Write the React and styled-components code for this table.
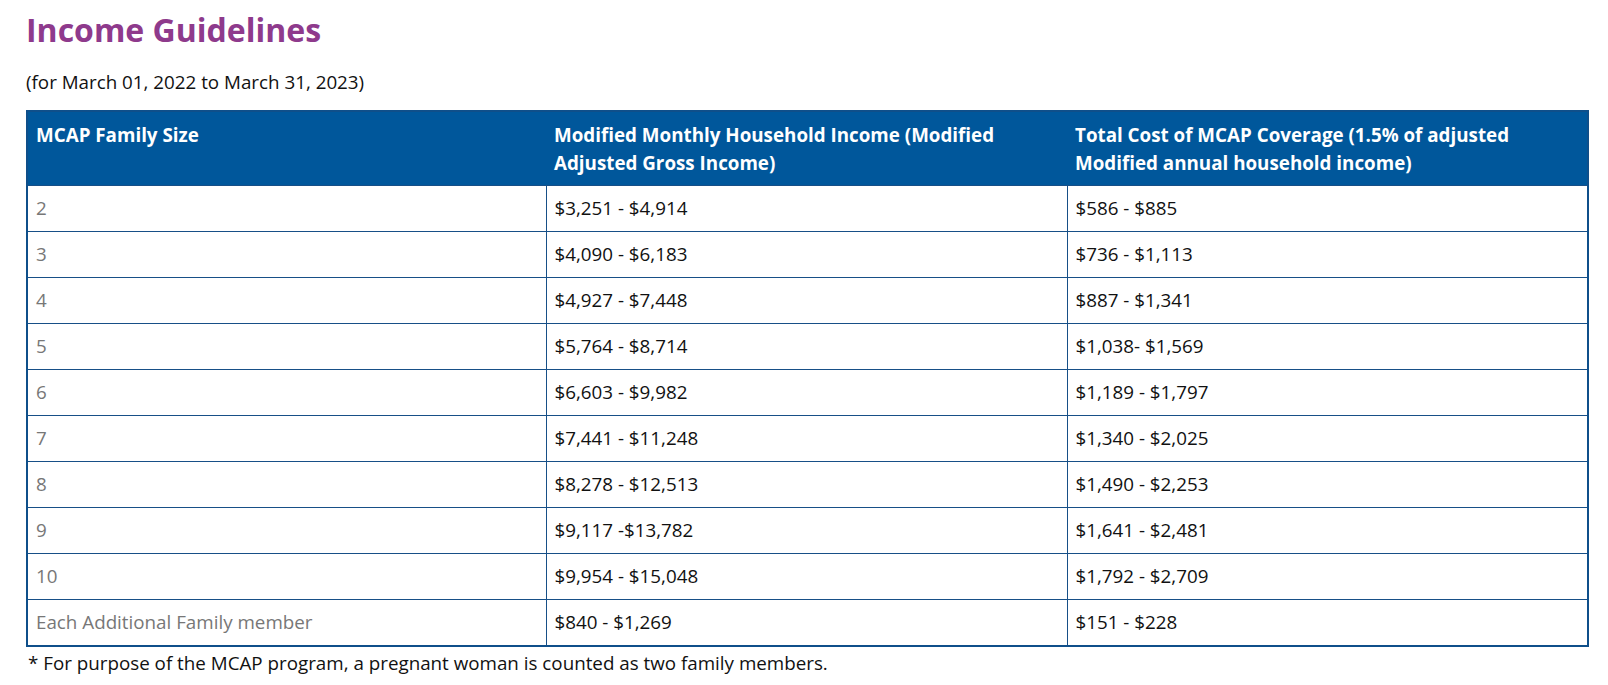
import React from "react";
import styled, { createGlobalStyle } from "styled-components";

const rows = [
  ["2", "$3,251 - $4,914", "$586 - $885"],
  ["3", "$4,090 - $6,183", "$736 - $1,113"],
  ["4", "$4,927 - $7,448", "$887 - $1,341"],
  ["5", "$5,764 - $8,714", "$1,038- $1,569"],
  ["6", "$6,603 - $9,982", "$1,189 - $1,797"],
  ["7", "$7,441 - $11,248", "$1,340 - $2,025"],
  ["8", "$8,278 - $12,513", "$1,490 - $2,253"],
  ["9", "$9,117 -$13,782", "$1,641 - $2,481"],
  ["10", "$9,954 - $15,048", "$1,792 - $2,709"],
  ["Each Additional Family member", "$840 - $1,269", "$151 - $228"],
];

export default function App() {
  return (
    <Page>
      <GlobalStyle />
      <Title>Income Guidelines</Title>
      <Subtitle>(for March 01, 2022 to March 31, 2023)</Subtitle>
      <Table>
        <colgroup>
          <col style={{ width: "519px" }} />
          <col style={{ width: "521px" }} />
          <col />
        </colgroup>
        <thead>
          <tr>
            <Th>MCAP Family Size</Th>
            <Th>Modified Monthly Household Income (Modified Adjusted Gross Income)</Th>
            <Th>Total Cost of MCAP Coverage (1.5% of adjusted Modified annual household income)</Th>
          </tr>
        </thead>
        <tbody>
          {rows.map((r, i) => (
            <tr key={i}>
              <Td muted>{r[0]}</Td>
              <Td>{r[1]}</Td>
              <Td>{r[2]}</Td>
            </tr>
          ))}
        </tbody>
      </Table>
      <Note>* For purpose of the MCAP program, a pregnant woman is counted as two family members.</Note>
    </Page>
  );
}

const GlobalStyle = createGlobalStyle`
  body {
    margin: 0;
    background: #ffffff;
    font-family: "Open Sans", "Noto Sans", sans-serif;
    color: #111111;
  }
`;

const Page = styled.div`
  padding: 8px 20px 0 26px;
`;

const Title = styled.h1`
  margin: 0;
  font-size: 32px;
  line-height: 44px;
  font-weight: 700;
  color: #8e3a8c;
`;

const Subtitle = styled.p`
  margin: 16px 0 14px;
  font-size: 18.8px;
  line-height: 28px;
  color: #111111;
`;

const Table = styled.table`
  width: 1563px;
  border-collapse: collapse;
  table-layout: fixed;
  border: 2px solid #0f4f8a;
`;

const Th = styled.th`
  background: #00579b;
  color: #ffffff;
  text-align: left;
  vertical-align: top;
  font-size: 18.8px;
  font-weight: 700;
  line-height: 28px;
  padding: 9px 8px 8px 8px;
  border: none;
`;

const Td = styled.td`
  font-size: 18.8px;
  line-height: 28px;
  padding: 8px 8px 9px;
  border: 1px solid #174f87;
  color: ${(p) => (p.muted ? "#777777" : "#111111")};
`;

const Note = styled.p`
  margin: 2px 0 0 2px;
  font-size: 18.8px;
  line-height: 28px;
  color: #111111;
`;
